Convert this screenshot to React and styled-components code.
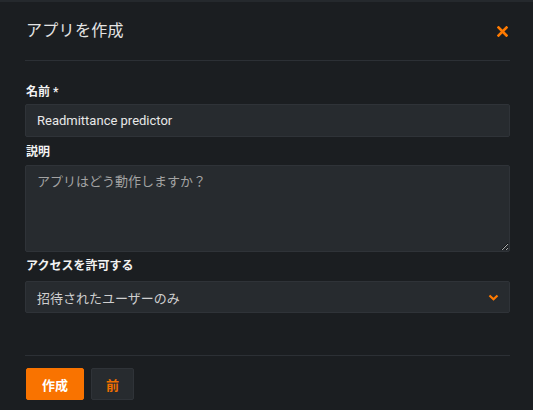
import React from "react";
import styled, { createGlobalStyle } from "styled-components";

const Global = createGlobalStyle`
  html, body { margin: 0; padding: 0; background: #1b1e21; }
  body { font-family: Roboto, "Noto Sans CJK JP", sans-serif; }
  * { box-sizing: border-box; }
`;

const Dialog = styled.div`
  width: 533px;
  height: 410px;
  background: #1b1e21;
  border-top: 2px solid #25292d;
  padding: 0 23px 0 25px;
  display: flex;
  flex-direction: column;
`;

const Header = styled.div`
  height: 59px;
  display: flex;
  align-items: center;
  justify-content: space-between;
  border-bottom: 1px solid #2c3035;
`;

const Title = styled.h2`
  margin: 0;
  font-size: 16px;
  font-weight: 400;
  color: #e4e4e4;
  line-height: 20px;
  padding-left: 1px;
  letter-spacing: 0.3px;
`;

const Close = styled.button`
  background: none;
  border: none;
  padding: 0;
  width: 11px;
  height: 11px;
  margin-right: 2px;
  display: flex;
  align-items: center;
  justify-content: center;
  cursor: pointer;
`;

const Form = styled.div`
  display: flex;
  flex-direction: column;
  padding-top: 22px;
`;

const Label = styled.label`
  font-size: 12px;
  font-weight: 700;
  color: #f2f2f2;
  line-height: 18px;
  padding-left: 1px;
  margin-top: ${(p) => p.$mt || 0}px;
  margin-bottom: ${(p) => p.$mb || 3}px;
`;

const fieldBase = `
  width: 100%;
  background: #272b2f;
  border: 1px solid #2f3338;
  border-radius: 2px;
  font-family: Roboto, "Noto Sans CJK JP", sans-serif;
  font-size: 13px;
  outline: none;
`;

const Input = styled.input`
  ${fieldBase}
  height: 33px;
  padding: 0 11px;
  color: #e8e8e8;
`;

const TextArea = styled.textarea`
  ${fieldBase}
  height: 87px;
  padding: 7px 11px;
  color: #e8e8e8;
  resize: vertical;
  line-height: 18px;
  &::placeholder { color: #a3a3a3; }
`;

const Select = styled.div`
  ${fieldBase}
  height: 32px;
  padding: 0 10px 0 11px;
  display: flex;
  align-items: center;
  justify-content: space-between;
  color: #cfcfcf;
`;

const Footer = styled.div`
  margin-top: 42px;
  border-top: 1px solid #2c3035;
  padding-top: 12px;
  display: flex;
  gap: 7px;
`;

const Button = styled.button`
  height: 32px;
  padding: 0 ${(p) => (p.$primary ? 15 : 14)}px;
  margin-left: ${(p) => (p.$primary ? 1 : 0)}px;
  border-radius: 2px;
  font-family: Roboto, "Noto Sans CJK JP", sans-serif;
  font-size: 13px;
  font-weight: 700;
  cursor: pointer;
  background: ${(p) => (p.$primary ? "#f97300" : "#272b2f")};
  color: ${(p) => (p.$primary ? "#ffffff" : "#f07000")};
  border: 1px solid ${(p) => (p.$primary ? "#f97300" : "#2f3338")};
`;

export default function App() {
  return (
    <>
      <Global />
      <Dialog>
        <Header>
          <Title>アプリを作成</Title>
          <Close aria-label="close">
            <svg width="11" height="11" viewBox="0 0 11 11">
              <path d="M1.5 1.5 L9.5 9.5 M9.5 1.5 L1.5 9.5" stroke="#ff7a00" strokeWidth="2.6" strokeLinecap="square" />
            </svg>
          </Close>
        </Header>
        <Form>
          <Label $mb={3}>名前 *</Label>
          <Input defaultValue="Readmittance predictor" />
          <Label $mt={6} $mb={4}>説明</Label>
          <TextArea placeholder="アプリはどう動作しますか？" />
          <Label $mt={5} $mb={6}>アクセスを許可する</Label>
          <Select>
            <span>招待されたユーザーのみ</span>
            <svg width="11" height="7" viewBox="0 0 11 7">
              <path d="M1.5 1.5 L5.5 5.2 L9.5 1.5" stroke="#ff7a00" strokeWidth="2.2" fill="none" />
            </svg>
          </Select>
        </Form>
        <Footer>
          <Button $primary>作成</Button>
          <Button>前</Button>
        </Footer>
      </Dialog>
    </>
  );
}
